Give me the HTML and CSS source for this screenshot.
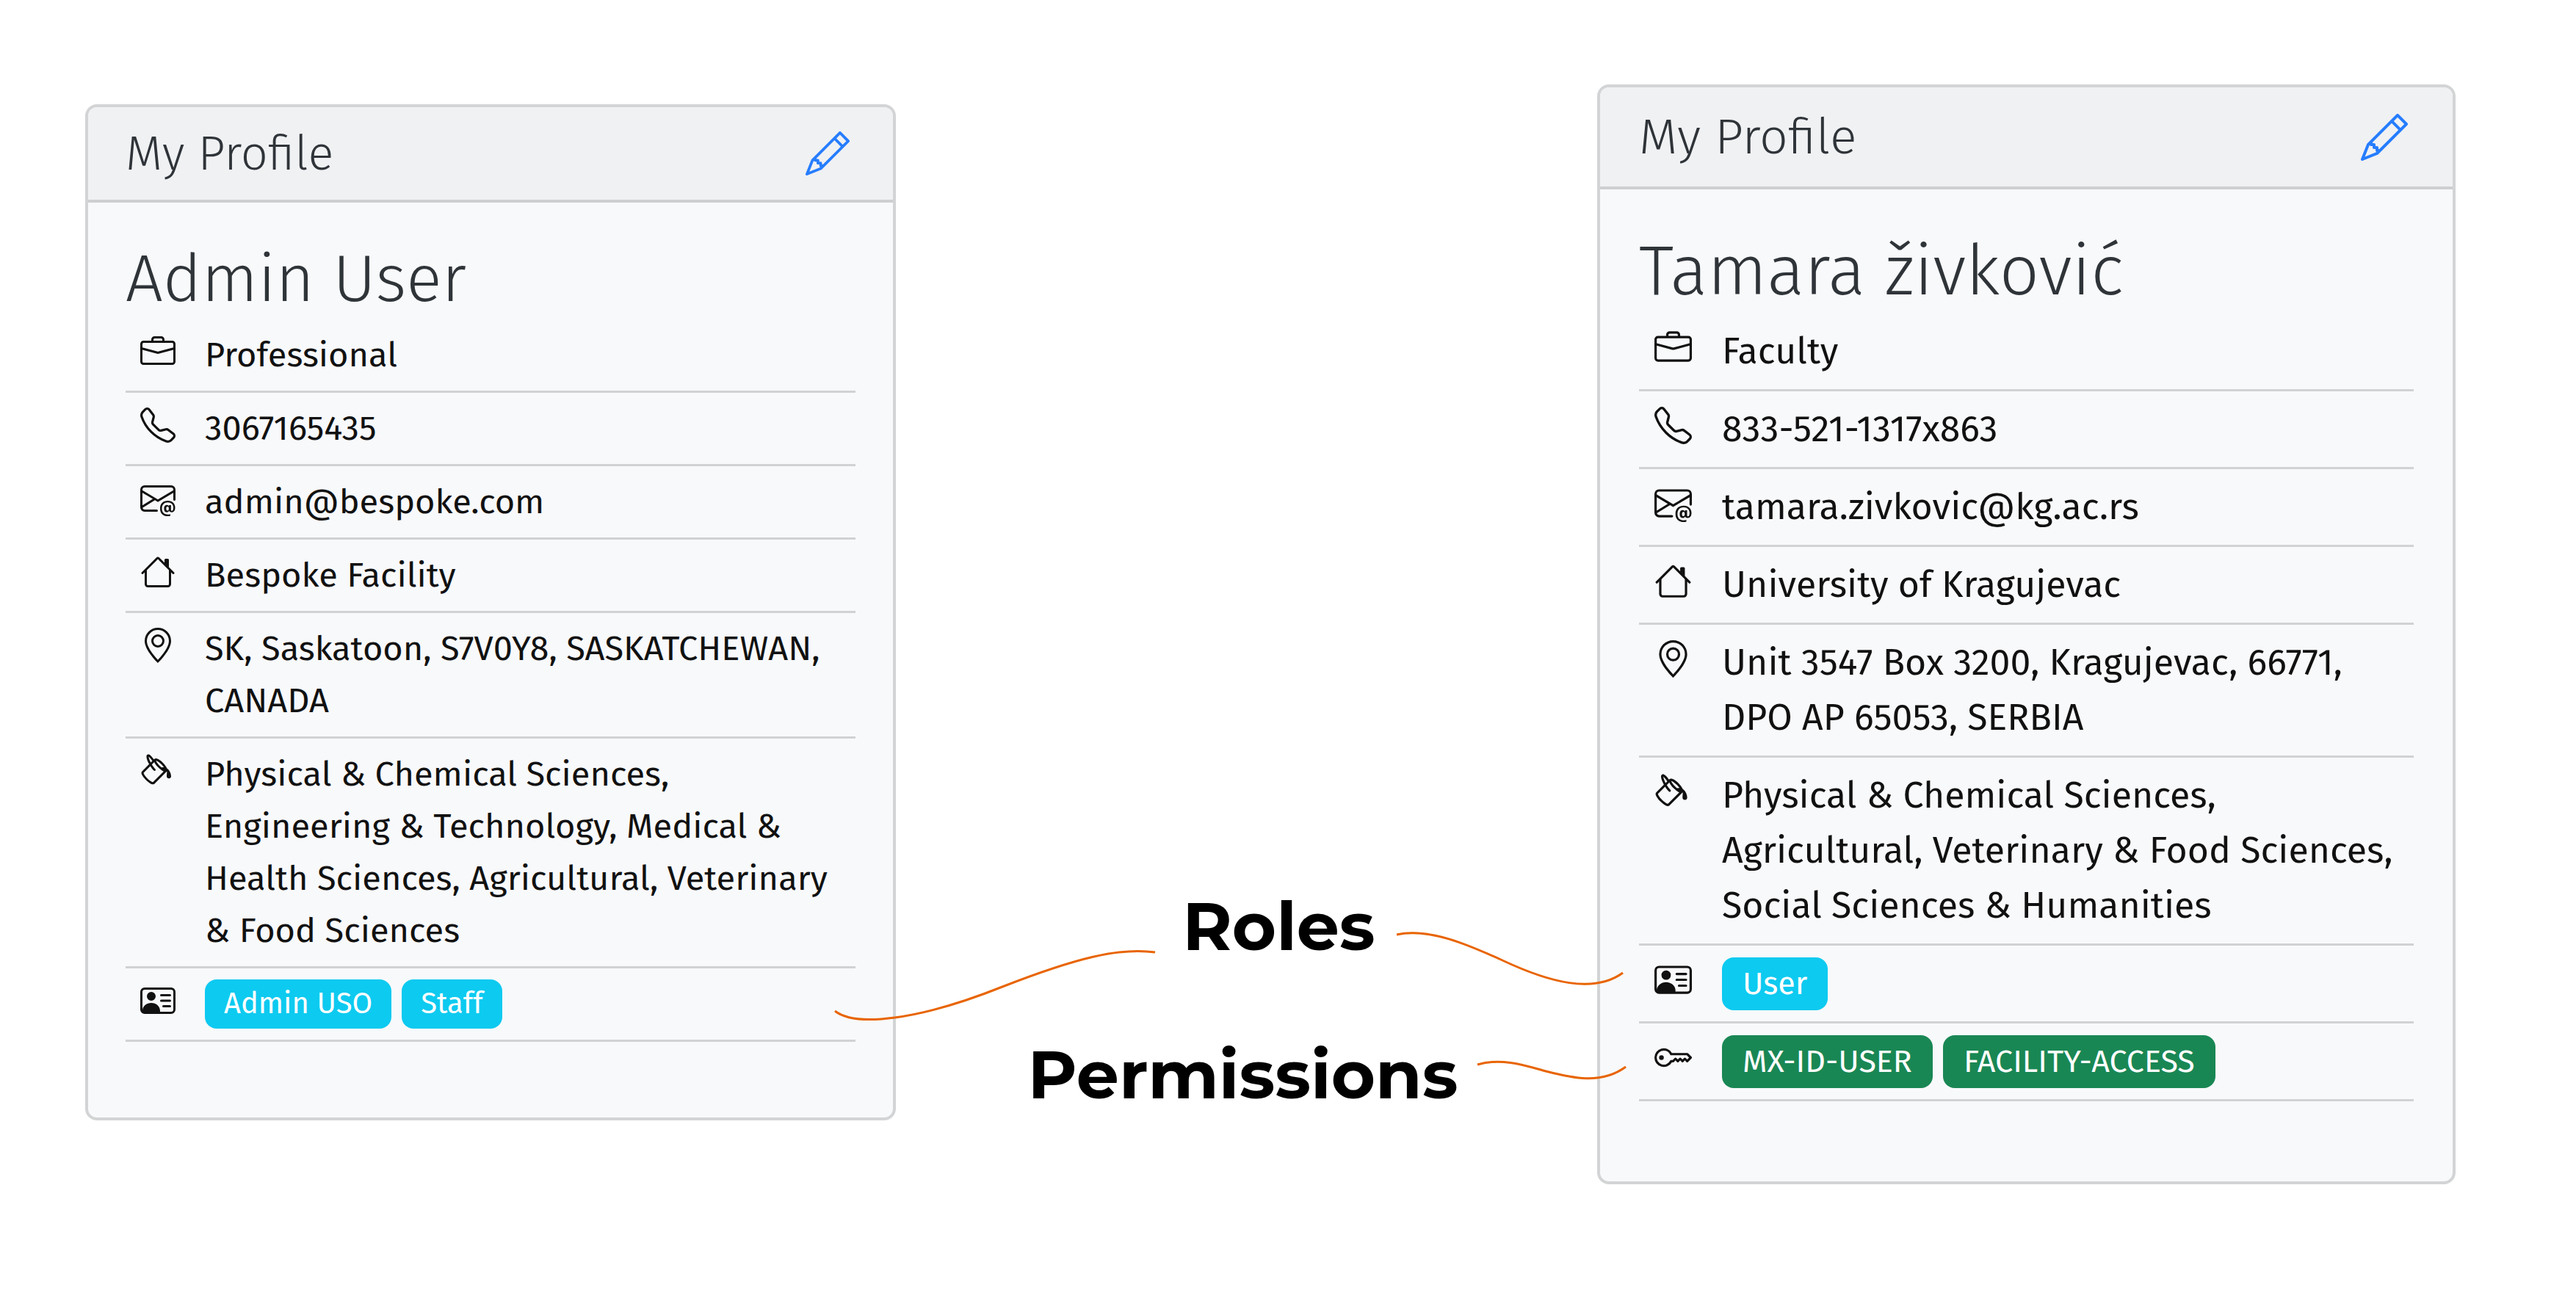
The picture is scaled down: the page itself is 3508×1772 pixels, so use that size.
FILE: index.html
```html
<!DOCTYPE html>
<html lang="en">
<head>
<meta charset="utf-8">
<meta name="viewport" content="width=device-width, initial-scale=1">
<title>My Profile: roles and permissions</title>
<link rel="stylesheet" href="styles.css">
</head>
<body>
<svg class="sprite" aria-hidden="true">
  <symbol id="pencil" viewBox="0 0 16 16"><path d="M12.146.146a.5.5 0 0 1 .708 0l3 3a.5.5 0 0 1 0 .708l-10 10a.5.5 0 0 1-.168.11l-5 2a.5.5 0 0 1-.65-.65l2-5a.5.5 0 0 1 .11-.168l10-10zM11.207 2.5 13.5 4.793 14.793 3.5 12.5 1.207 11.207 2.5zm1.586 3L10.5 3.207 4 9.707V10h.5a.5.5 0 0 1 .5.5v.5h.5a.5.5 0 0 1 .5.5v.5h.293l6.5-6.5zm-9.761 5.175-.106.106-1.528 3.821 3.821-1.528.106-.106A.5.5 0 0 1 5 12.5V12h-.5a.5.5 0 0 1-.5-.5V11h-.5a.5.5 0 0 1-.468-.325z"/></symbol>
  <symbol id="briefcase" viewBox="0 0 16 16"><path d="M6.5 1A1.5 1.5 0 0 0 5 2.5V3H1.5A1.5 1.5 0 0 0 0 4.5v8A1.5 1.5 0 0 0 1.5 14h13a1.5 1.5 0 0 0 1.5-1.5v-8A1.5 1.5 0 0 0 14.5 3H11v-.5A1.5 1.5 0 0 0 9.5 1h-3zm0 1h3a.5.5 0 0 1 .5.5V3H6v-.5a.5.5 0 0 1 .5-.5zm1.886 6.914L15 7.151V12.5a.5.5 0 0 1-.5.5h-13a.5.5 0 0 1-.5-.5V7.15l6.614 1.764a1.5 1.5 0 0 0 .772 0zM1.5 4h13a.5.5 0 0 1 .5.5v1.616L8.129 7.948a.5.5 0 0 1-.258 0L1 6.116V4.5a.5.5 0 0 1 .5-.5z"/></symbol>
  <symbol id="telephone" viewBox="0 0 16 16"><path d="M3.654 1.328a.678.678 0 0 0-1.015-.063L1.605 2.3c-.483.484-.661 1.169-.45 1.77a17.568 17.568 0 0 0 4.168 6.608 17.569 17.569 0 0 0 6.608 4.168c.601.211 1.286.033 1.77-.45l1.034-1.034a.678.678 0 0 0-.063-1.015l-2.307-1.794a.678.678 0 0 0-.58-.122l-2.19.547a1.745 1.745 0 0 1-1.657-.459L5.482 8.062a1.745 1.745 0 0 1-.46-1.657l.548-2.19a.678.678 0 0 0-.122-.58L3.654 1.328zM1.884.511a1.745 1.745 0 0 1 2.612.163L6.29 2.98c.329.423.445.974.315 1.494l-.547 2.19a.678.678 0 0 0 .178.643l2.457 2.457a.678.678 0 0 0 .644.178l2.189-.547a1.745 1.745 0 0 1 1.494.315l2.306 1.794c.829.645.905 1.87.163 2.611l-1.034 1.034c-.74.74-1.846 1.065-2.877.702a18.634 18.634 0 0 1-7.01-4.42 18.634 18.634 0 0 1-4.42-7.009c-.362-1.03-.037-2.137.703-2.877L1.885.511z"/></symbol>
  <symbol id="envelope-at" viewBox="0 0 16 16"><path d="M2 2a2 2 0 0 0-2 2v8.01A2 2 0 0 0 2 14h5.5a.5.5 0 0 0 0-1H2a1 1 0 0 1-.966-.741l5.64-3.471L8 9.583l7-4.2V8.5a.5.5 0 0 0 1 0V4a2 2 0 0 0-2-2H2Zm3.708 6.208L1 11.105V5.383l4.708 2.825ZM1 4.217V4a1 1 0 0 1 1-1h12a1 1 0 0 1 1 1v.217l-7 4.2-7-4.2Z"/><path d="M14.247 14.269c1.01 0 1.587-.857 1.587-2.025v-.21C15.834 10.43 14.64 9 12.52 9h-.035C10.42 9 9 10.36 9 12.432v.214C9 14.82 10.438 16 12.358 16h.044c.594 0 1.018-.074 1.237-.175v-.73c-.245.11-.673.18-1.18.18h-.044c-1.334 0-2.571-.788-2.571-2.655v-.157c0-1.657 1.058-2.724 2.64-2.724h.04c1.535 0 2.484 1.05 2.484 2.326v.118c0 .975-.324 1.39-.639 1.39-.232 0-.41-.148-.41-.42v-2.19h-.906v.569h-.03c-.084-.298-.368-.63-.954-.63-.778 0-1.259.555-1.259 1.4v.528c0 .892.49 1.434 1.26 1.434.471 0 .896-.227 1.014-.643h.043c.118.42.617.648 1.12.648Zm-2.453-1.588v-.227c0-.546.227-.791.573-.791.297 0 .572.192.572.708v.367c0 .573-.253.744-.564.744-.354 0-.581-.215-.581-.8Z"/></symbol>
  <symbol id="house" viewBox="0 0 16 16"><path d="M2 13.5V7h1v6.5a.5.5 0 0 0 .5.5h9a.5.5 0 0 0 .5-.5V7h1v6.5a1.5 1.5 0 0 1-1.5 1.5h-9A1.5 1.5 0 0 1 2 13.5zm11-11V6l-2-2V2.5a.5.5 0 0 1 .5-.5h1a.5.5 0 0 1 .5.5z"/><path d="M7.293 1.5a1 1 0 0 1 1.414 0l6.647 6.646a.5.5 0 0 1-.708.708L8 2.207 1.354 8.854a.5.5 0 1 1-.708-.708L7.293 1.5z"/></symbol>
  <symbol id="geo-alt" viewBox="0 0 16 16"><path d="M12.166 8.94c-.524 1.062-1.234 2.12-1.96 3.07A31.493 31.493 0 0 1 8 14.58a31.481 31.481 0 0 1-2.206-2.57c-.726-.95-1.436-2.008-1.96-3.07C3.304 7.867 3 6.862 3 6a5 5 0 0 1 10 0c0 .862-.305 1.867-.834 2.94zM8 16s6-5.686 6-10A6 6 0 0 0 2 6c0 4.314 6 10 6 10z"/><path d="M8 8a2 2 0 1 1 0-4 2 2 0 0 1 0 4zm0 1a3 3 0 1 0 0-6 3 3 0 0 0 0 6z"/></symbol>
  <symbol id="paint-bucket" viewBox="0 0 16 16"><path d="M6.192 2.78c-.458-.677-.927-1.248-1.35-1.643a2.972 2.972 0 0 0-.71-.515c-.217-.104-.56-.205-.882-.02-.367.213-.427.63-.43.896-.003.304.064.664.173 1.044.196.687.556 1.528 1.035 2.402L.752 8.22c-.277.277-.269.656-.218.918.055.283.187.593.36.903.348.627.92 1.361 1.626 2.068.707.707 1.441 1.278 2.068 1.626.31.173.62.305.903.36.262.05.64.059.918-.218l5.615-5.615c.118.257.092.512.05.939-.03.292-.068.665-.073 1.176v.123h.003a1 1 0 0 0 1.993 0H14v-.057a1.01 1.01 0 0 0-.004-.117c-.055-1.25-.7-2.738-1.86-3.494a4.322 4.322 0 0 0-.211-.434c-.349-.626-.92-1.36-1.627-2.067-.707-.707-1.441-1.279-2.068-1.627-.31-.172-.62-.304-.903-.36-.262-.05-.64-.058-.918.219l-.217.216zM4.16 1.867c.381.356.844.922 1.311 1.632l-.704.705c-.382-.727-.66-1.402-.813-1.938a3.283 3.283 0 0 1-.131-.673c.091.061.204.15.337.274zm.394 3.965c.54.852 1.107 1.567 1.607 2.033a.5.5 0 1 0 .682-.732c-.453-.422-1.017-1.136-1.564-2.027l1.088-1.088c.054.12.115.243.183.365.349.627.92 1.361 1.627 2.068.706.707 1.44 1.278 2.068 1.626.122.068.244.13.365.183l-4.861 4.862a.571.571 0 0 1-.068-.01c-.137-.027-.342-.104-.608-.252-.524-.292-1.186-.8-1.846-1.46-.66-.66-1.168-1.32-1.46-1.846-.147-.265-.225-.47-.251-.607a.573.573 0 0 1-.01-.068l3.048-3.047zm2.87-1.935a2.44 2.44 0 0 1-.241-.561c.135.033.324.11.562.241.524.292 1.186.8 1.846 1.46.45.45.83.901 1.118 1.31a3.497 3.497 0 0 0-1.066.091 11.27 11.27 0 0 1-.76-.694c-.66-.66-1.167-1.322-1.458-1.847z"/></symbol>
  <symbol id="person-vcard" viewBox="0 0 16 16"><path d="M5 8a2 2 0 1 0 0-4 2 2 0 0 0 0 4Zm4-2.5a.5.5 0 0 1 .5-.5h4a.5.5 0 0 1 0 1h-4a.5.5 0 0 1-.5-.5ZM9 8a.5.5 0 0 1 .5-.5h4a.5.5 0 0 1 0 1h-4A.5.5 0 0 1 9 8Zm1 2.5a.5.5 0 0 1 .5-.5h3a.5.5 0 0 1 0 1h-3a.5.5 0 0 1-.5-.5Z"/><path d="M2 2a2 2 0 0 0-2 2v8a2 2 0 0 0 2 2h12a2 2 0 0 0 2-2V4a2 2 0 0 0-2-2H2ZM1 4a1 1 0 0 1 1-1h12a1 1 0 0 1 1 1v8a1 1 0 0 1-1 1H8.96c.026-.163.04-.33.04-.5C9 10.567 7.21 9 5 9c-2.086 0-3.8 1.398-3.984 3.181A1.006 1.006 0 0 1 1 12V4Z"/></symbol>
  <symbol id="key" viewBox="0 0 16 16"><path d="M0 8a4 4 0 0 1 7.465-2H14a.5.5 0 0 1 .354.146l1.5 1.5a.5.5 0 0 1 0 .708l-1.5 1.5a.5.5 0 0 1-.708 0L13 9.207l-.646.647a.5.5 0 0 1-.708 0L11 9.207l-.646.647a.5.5 0 0 1-.708 0L9 9.207l-.646.647A.5.5 0 0 1 8 10h-.535A4 4 0 0 1 0 8zm4-3a3 3 0 1 0 2.712 4.285A.5.5 0 0 1 7.163 9h.63l.853-.854a.5.5 0 0 1 .708 0l.646.647.646-.647a.5.5 0 0 1 .708 0l.646.647.646-.647a.5.5 0 0 1 .708 0l.646.647.793-.793-1-1h-6.63a.5.5 0 0 1-.451-.285A3 3 0 0 0 4 5z"/><path d="M4 8a1 1 0 1 1-2 0 1 1 0 0 1 2 0z"/></symbol>
</svg>

<main class="board">
  <section class="card">
    <header class="card-header">
      <h2 class="card-title">My Profile</h2>
      <button class="edit" type="button" aria-label="Edit profile"><svg class="edit-icon"><use href="#pencil"/></svg></button>
    </header>
    <div class="card-body">
      <h1 class="name">Admin User</h1>
      <ul class="details">
        <li class="row"><svg class="icon"><use href="#briefcase"/></svg><span class="text">Professional</span></li>
        <li class="row"><svg class="icon"><use href="#telephone"/></svg><span class="text">3067165435</span></li>
        <li class="row"><svg class="icon"><use href="#envelope-at"/></svg><span class="text">admin@bespoke.com</span></li>
        <li class="row"><svg class="icon"><use href="#house"/></svg><span class="text">Bespoke Facility</span></li>
        <li class="row"><svg class="icon"><use href="#geo-alt"/></svg><span class="text">SK, Saskatoon, S7V0Y8, SASKATCHEWAN, CANADA</span></li>
        <li class="row"><svg class="icon"><use href="#paint-bucket"/></svg><span class="text">Physical &amp; Chemical Sciences, Engineering &amp; Technology, Medical &amp; Health Sciences, Agricultural, Veterinary &amp; Food Sciences</span></li>
        <li class="row"><svg class="icon"><use href="#person-vcard"/></svg><span class="badges"><span class="badge role">Admin USO</span><span class="badge role">Staff</span></span></li>
      </ul>
    </div>
  </section>

  <section class="notes">
    <p class="note note-roles">Roles</p>
    <p class="note">Permissions</p>
    <svg class="connectors" viewBox="1136 1260 1080 240" preserveAspectRatio="none" aria-hidden="true">
      <path d="M1137 1377C1165 1399 1250 1390 1365 1344C1465 1305 1525 1290 1573 1297"/>
      <path d="M1902 1273C1945 1263 2000 1287 2046 1308C2110 1338 2170 1354 2210 1325"/>
      <path d="M2012 1450C2045 1440 2080 1452 2105 1459C2140 1468 2180 1478 2214 1453"/>
    </svg>
  </section>

  <section class="card card-large">
    <header class="card-header">
      <h2 class="card-title">My Profile</h2>
      <button class="edit" type="button" aria-label="Edit profile"><svg class="edit-icon"><use href="#pencil"/></svg></button>
    </header>
    <div class="card-body">
      <h1 class="name">Tamara živković</h1>
      <ul class="details">
        <li class="row"><svg class="icon"><use href="#briefcase"/></svg><span class="text">Faculty</span></li>
        <li class="row"><svg class="icon"><use href="#telephone"/></svg><span class="text">833-521-1317x863</span></li>
        <li class="row"><svg class="icon"><use href="#envelope-at"/></svg><span class="text">tamara.zivkovic@kg.ac.rs</span></li>
        <li class="row"><svg class="icon"><use href="#house"/></svg><span class="text">University of Kragujevac</span></li>
        <li class="row"><svg class="icon"><use href="#geo-alt"/></svg><span class="text">Unit 3547 Box 3200, Kragujevac, 66771, DPO AP 65053, SERBIA</span></li>
        <li class="row"><svg class="icon"><use href="#paint-bucket"/></svg><span class="text">Physical &amp; Chemical Sciences, Agricultural, Veterinary &amp; Food Sciences, Social Sciences &amp; Humanities</span></li>
        <li class="row"><svg class="icon"><use href="#person-vcard"/></svg><span class="badges"><span class="badge role">User</span></span></li>
        <li class="row"><svg class="icon"><use href="#key"/></svg><span class="badges"><span class="badge permission">MX-ID-USER</span><span class="badge permission">FACILITY-ACCESS</span></span></li>
      </ul>
    </div>
  </section>
</main>
</body>
</html>
```
FILE: styles.css
```css
* { box-sizing: border-box; }

body {
  margin: 0;
  background: #fff;
  color: #111;
  font-family: "Fira Sans", "Noto Sans", sans-serif;
}

.sprite { display: none; }

svg { fill: currentColor; }

.board {
  display: grid;
  grid-template-columns: 1104fr 955fr 1169fr;
  align-items: start;
  padding: 0 164px 120px 116px;
}

.card {
  --text: 47px;
  --line: 71px;
  --badge-text: 40px;
  --badge-height: 67px;
  --badge-pad: 26px;
  --title: 65px;
  --name: 90px;
  --name-line: 109px;
  --header: 130px;
  --pad: 51px;
  --name-gap: 50px;
  --row-pad: 13px;
  --icon: 48px;
  --icon-pad: 20px;
  --icon-gap: 40px;
  --pencil: 60px;
  --end: 103px;
  margin-top: 142px;
  border: 4px solid #d2d4d5;
  border-radius: 16px;
  background: #f8f9fb;
  overflow: hidden;
}

.card-large {
  --text: 50px;
  --line: 75px;
  --badge-text: 43px;
  --badge-height: 72px;
  --badge-pad: 28px;
  --title: 68px;
  --name: 95px;
  --name-line: 115px;
  --header: 139px;
  --pad: 53px;
  --name-gap: 54px;
  --row-pad: 14px;
  --icon: 51px;
  --icon-pad: 21px;
  --icon-gap: 41px;
  --pencil: 64px;
  --end: 109px;
  margin-top: 115px;
}

.card-header {
  display: flex;
  align-items: center;
  justify-content: space-between;
  height: var(--header);
  padding: 0 var(--pad);
  border-bottom: 4px solid #cdcfd0;
  background: #f0f1f3;
}

.card-title {
  margin: 0;
  font-size: var(--title);
  font-weight: 300;
  line-height: 1.2;
  color: #2f3439;
}

.edit {
  display: flex;
  padding: 0 8px;
  border: 0;
  background: none;
  color: #267dff;
}

.edit-icon {
  width: var(--pencil);
  height: var(--pencil);
}

.card-body { padding: var(--name-gap) var(--pad) var(--end); }

.name {
  margin: 0;
  font-size: var(--name);
  font-weight: 300;
  line-height: var(--name-line);
  color: #2f3439;
}

.details {
  margin: 0;
  padding: 0;
  list-style: none;
}

.row {
  display: flex;
  gap: var(--icon-gap);
  padding: var(--row-pad) var(--icon-pad);
  border-bottom: 3px solid #d0d2d3;
  font-size: var(--text);
  line-height: var(--line);
}

.icon {
  flex: none;
  width: var(--icon);
  height: var(--icon);
  margin-top: 7px;
}

.badges {
  display: flex;
  align-items: center;
  gap: 14px;
  height: var(--line);
}

.badge {
  height: var(--badge-height);
  padding: 0 var(--badge-pad);
  border-radius: 16px;
  color: #fff;
  font-size: var(--badge-text);
  line-height: var(--badge-height);
}

.role { background: #0dcaf0; }

.permission { background: #198754; }

.notes {
  position: relative;
  display: flex;
  flex-direction: column;
  align-items: center;
  gap: 90px;
  padding: 1205px 10px 0 0;
}

.note {
  margin: 0;
  color: #000;
  font-family: "Montserrat", "Inter", sans-serif;
  font-size: 92px;
  font-weight: 700;
  line-height: 112px;
}

.note-roles { padding-left: 98px; }

.connectors {
  position: absolute;
  z-index: 1;
  top: 1260px;
  left: -84px;
  width: calc(100% + 125px);
  height: 240px;
  fill: none;
  stroke: #e86400;
  stroke-width: 3;
}
```
